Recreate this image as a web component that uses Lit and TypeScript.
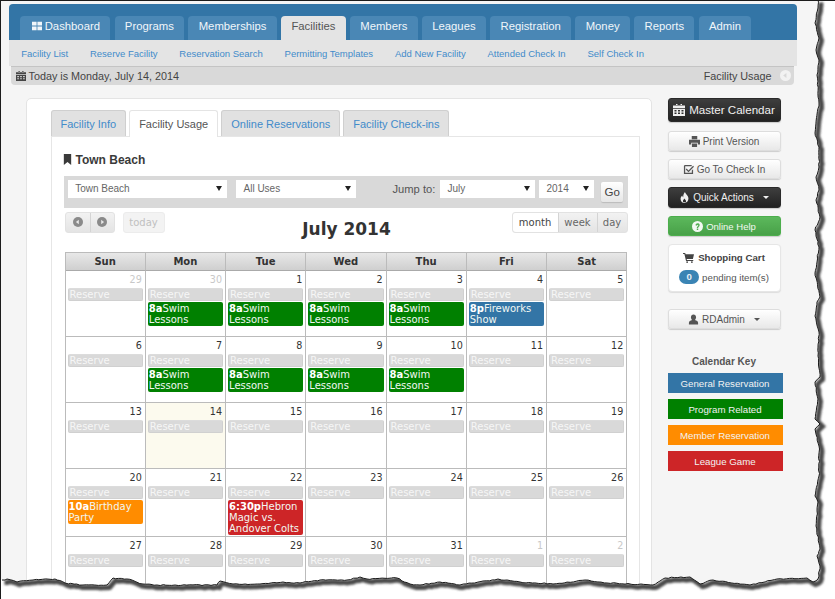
import { LitElement, html, css, svg } from "lit";
import { customElement } from "lit/decorators.js";

type Ev = { time: string; title: string; kind: string };
type Day = { n: number; other?: boolean; today?: boolean; ev?: Ev };

const swim = (): Ev => ({ time: "8a", title: "Swim Lessons", kind: "green" });

const weeks: Day[][] = [
  [{ n: 29, other: true }, { n: 30, other: true, ev: swim() }, { n: 1, ev: swim() }, { n: 2, ev: swim() }, { n: 3, ev: swim() }, { n: 4, ev: { time: "8p", title: "Fireworks Show", kind: "blue" } }, { n: 5 }],
  [{ n: 6 }, { n: 7, ev: swim() }, { n: 8, ev: swim() }, { n: 9, ev: swim() }, { n: 10, ev: swim() }, { n: 11 }, { n: 12 }],
  [{ n: 13 }, { n: 14, today: true }, { n: 15 }, { n: 16 }, { n: 17 }, { n: 18 }, { n: 19 }],
  [{ n: 20, ev: { time: "10a", title: "Birthday Party", kind: "orange" } }, { n: 21 }, { n: 22, ev: { time: "6:30p", title: "Hebron Magic vs. Andover Colts", kind: "red" } }, { n: 23 }, { n: 24 }, { n: 25 }, { n: 26 }],
  [{ n: 27 }, { n: 28 }, { n: 29 }, { n: 30 }, { n: 31 }, { n: 1, other: true }, { n: 2, other: true }],
];

const mainTabs = ["Programs", "Memberships", "Facilities", "Members", "Leagues", "Registration", "Money", "Reports", "Admin"];
const subLinks = ["Facility List", "Reserve Facility", "Reservation Search", "Permitting Templates", "Add New Facility", "Attended Check In", "Self Check In"];
const innerTabs = ["Facility Info", "Facility Usage", "Online Reservations", "Facility Check-ins"];
const dayNames = ["Sun", "Mon", "Tue", "Wed", "Thu", "Fri", "Sat"];
const calKey = [["General Reservation", "blue"], ["Program Related", "green"], ["Member Reservation", "orange"], ["League Game", "red"]];

// torn paper outline, read off the screenshot
const tornEdge = [
  [818, 0], [818, 8], [815, 23], [819, 38], [816, 50], [819, 60], [817, 75], [819, 103], [815, 133], [819, 147], [819, 167], [816, 177], [819, 190], [816, 200], [820, 217], [815, 230], [819, 247], [815, 273], [820, 297],
  [817, 302], [815, 316], [819, 332], [818, 356], [820, 377], [815, 382], [818, 399], [815, 419], [820, 424], [815, 429], [819, 446], [819, 476], [815, 496], [818, 502], [816, 526], [820, 549], [817, 556], [820, 566], [818, 579], [813, 582], [807, 578],
  [777, 579], [750, 585], [713, 580], [700, 584], [690, 577], [665, 578], [653, 585], [607, 583], [585, 580], [553, 584], [520, 582], [498, 579], [460, 585], [440, 582], [420, 585], [410, 584], [397, 578], [367, 579], [360, 577], [347, 580], [320, 580], [300, 583], [283, 582], [260, 584], [233, 584], [220, 581], [217, 585], [157, 585], [143, 584], [127, 579], [113, 578], [107, 585], [83, 585], [65, 583], [55, 579], [33, 580], [17, 582], [7, 579], [2, 580],
];

function edgePath() {
  let d = "";
  let k = 0;
  const rnd = () => {
    k++;
    const v = Math.sin(k * 12.9898) * 43758.5453;
    return v - Math.floor(v) - 0.5;
  };
  tornEdge.forEach((p, i) => {
    if (i == 0) {
      d += `M${p[0]} ${p[1]}`;
      return;
    }
    const q = tornEdge[i - 1];
    const steps = Math.max(1, Math.round(Math.hypot(p[0] - q[0], p[1] - q[1]) / 3));
    for (let s = 1; s <= steps; s++) {
      const t = s / steps;
      const x = q[0] + (p[0] - q[0]) * t + (s < steps ? rnd() * 1.1 : 0);
      const y = q[1] + (p[1] - q[1]) * t + (s < steps ? rnd() * 1.1 : 0);
      d += `L${x.toFixed(1)} ${y.toFixed(1)}`;
    }
  });
  return d;
}

const icons: Record<string, any> = {
  grid: svg`<path d="M0 1h5.500v4.500H0zM6.500 1H12v4.500H6.500zM0 6.500h5.500V11H0zM6.500 6.500H12V11H6.500z"/>`,
  calendar: svg`<path d="M3 0h1.500v2H3zM7.500 0H9v2H7.500zM0 1.500h12v2.500H0zM0 4.800h12V12H0zM1.500 6v1.400h2V6zm3.500 0v1.400h2V6zm3.500 0v1.400h2V6zM1.500 8.600V10h2V8.600zm3.500 0V10h2V8.600zm3.500 0V10h2V8.600z" fill-rule="evenodd"/>`,
  bookmark: svg`<path d="M2 0h8v12L6 8.800 2 12z"/>`,
  print: svg`<path d="M3 0h6v3.500H3zM0 4.200h12v5H9.600V7.400H2.400v1.800H0zM3.200 8.200h5.600V12H3.200z"/>`,
  check: svg`<path d="M2 1h7.500v1.400H2.400v7.200h7.200V7l1.400-1.400V11H1V2zM11 2l1 1-6 6-3-3 1-1 2 2z" fill-rule="evenodd"/>`,
  fire: svg`<path d="M6.500 0c.6 2.200 3.800 3.800 3.800 7.200 0 2.800-2 4.800-4.300 4.800S1.700 10 1.700 7.500c0-1.700.8-2.800 1.800-3.800.1 1 .5 1.600 1.100 2C4.600 3.600 5 1.800 6.500 0zM6 7C5 8.200 4.300 9 4.300 10c0 .9.800 1.300 1.700 1.300s1.700-.4 1.700-1.300C7.700 9 6.700 8.200 6 7z" fill-rule="evenodd"/>`,
  help: svg`<path d="M6 0a6 6 0 1 1 0 12A6 6 0 0 1 6 0zM3.800 4.600l1.400.5c.1-.5.4-.8.9-.8.4 0 .7.2.7.6 0 .8-1.600 1-1.600 2.600h1.500c0-1 1.700-1.300 1.700-3.100C8.400 3.200 7.400 2.500 6.100 2.500c-1.200 0-2 .8-2.300 2.100zM5.200 8.200v1.500h1.600V8.200z" fill-rule="evenodd"/>`,
  cart: svg`<path d="M0 1h2.400l.4 1.500H12l-1.200 5H4l.3 1.200h6.900v1.100H3.300L1.500 2.100H0z"/><circle cx="4.500" cy="11" r="1"/><circle cx="9.700" cy="11" r="1"/>`,
  user: svg`<path d="M6 .5c1.700 0 2.800 1.300 2.800 3.100 0 1.300-.5 2.400-1.300 3 1.900.5 3.500 1.400 3.500 2.900v2H1v-2c0-1.500 1.600-2.400 3.500-2.900-.8-.6-1.300-1.700-1.300-3C3.200 1.800 4.300.5 6 .5z"/>`,
};

const icon = (name: string, size = 12) =>
  html`<svg class="ico" width=${size} height=${size} viewBox="0 0 12 12" fill="currentColor">${icons[name]}</svg>`;

const roundArrow = (dir: "left" | "right", size: number) => html`
  <svg class="ico" width=${size} height=${size} viewBox="0 0 12 12">
    <circle cx="6" cy="6" r="6" fill="currentColor"></circle>
    <path d=${dir == "left" ? "M7 3.200v5.600L3.500 6z" : "M5 3.200v5.600L8.500 6z"} fill="var(--arrow, #fff)"></path>
  </svg>`;

@customElement("app-root")
export class AppRoot extends LitElement {
  static styles = css`
    :host {
      display: block;
      width: 835px;
      height: 599px;
      overflow: hidden;
      background: #fff;
      font-family: "Liberation Sans", Arial, sans-serif;
      color: #333;
    }
    * { box-sizing: border-box; }
    .ico { flex: none; display: block; }

    .page {
      position: relative;
      width: 835px;
      height: 599px;
      overflow: hidden;
      background: #f5f5f5;
      border-top: 1.5px solid #1c1c1c;
      border-left: 1.5px solid #1c1c1c;
      padding: 2.5px 0 0 7.5px;
    }

    .top { width: 788px; }
    .bluebar {
      height: 36px;
      padding: 12px 0 0 11.700px;
      display: flex;
      gap: 4.300px;
      background: #3375a6;
      border-radius: 4px 4px 0 0;
    }
    .mtab {
      height: 24px;
      padding: 0 10.300px 3px;
      display: flex;
      align-items: center;
      gap: 3px;
      font-size: 11.300px;
      color: #f1f6fa;
      background: #4a87b5;
      border-radius: 4px 4px 0 0;
    }
    .mtab.first { padding-left: 11.500px; }
    .mtab.on { background: #e4e4e4; color: #555; }
    .subnav {
      height: 26px;
      padding: 2px 12.700px 0;
      display: flex;
      align-items: center;
      gap: 21.800px;
      background: #e4e4e4;
      font-size: 9.500px;
      color: #428bca;
    }
    .crumb {
      margin: 0 3px 0 2px;
      height: 19px;
      padding: 0 3px 0 5px;
      display: flex;
      align-items: center;
      justify-content: space-between;
      background: #d9d9d9;
      border-top: 1px solid #c4c4c4;
      border-radius: 0 0 4px 4px;
      font-size: 10.800px;
      color: #444;
    }
    .crumb span { display: flex; align-items: center; gap: 3px; }
    .crumb .back { --arrow: #d9d9d9; color: #f2f2f2; margin-left: 5px; }

    .main {
      display: flex;
      align-items: flex-start;
      gap: 16px;
      margin: 13px 0 0 17px;
    }
    .panel {
      width: 626px;
      height: 600px;
      flex: none;
      padding: 11px 11px 0 24px;
      background: #fff;
      border: 1px solid #e4e4e4;
      border-radius: 5px;
    }
    .itabs { display: flex; gap: 3px; height: 26px; }
    .itab {
      display: flex;
      align-items: center;
      padding: 1px 9px 0;
      font-size: 11px;
      color: #428bca;
      background: #e1e1e1;
      border: 1px solid #cfcfcf;
      border-bottom: none;
      border-radius: 3px 3px 0 0;
    }
    .itab.on {
      background: #fff;
      color: #555;
      border-color: #e4e4e4;
      position: relative;
      height: 27px;
    }
    .ibox {
      border: 1px solid #e6e6e6;
      border-bottom: none;
      padding: 0 11px 0 12px;
      height: 560px;
    }
    .venue {
      display: flex;
      align-items: center;
      gap: 3px;
      height: 39px;
      padding-top: 7px;
      margin-left: -2px;
      font-size: 12px;
      font-weight: bold;
      color: #3a3a3a;
    }
    .filters {
      height: 32px;
      padding: 4px 4px 0 4.700px;
      display: flex;
      background: #d9d9d9;
      font-size: 10px;
    }
    .sel {
      height: 18px;
      padding: 0 5.500px 0 7px;
      display: flex;
      align-items: center;
      justify-content: space-between;
      background: #fff;
      color: #666;
    }
    .sel i {
      width: 0;
      height: 0;
      border-left: 3.500px solid transparent;
      border-right: 3.500px solid transparent;
      border-top: 5px solid #222;
    }
    .jump { width: 48px; margin: 3px 0 0 36px; font-size: 11.200px; color: #555; white-space: nowrap; }
    .go {
      margin: 2px 0 0 6.700px;
      width: 22px;
      height: 20px;
      display: flex;
      align-items: center;
      justify-content: center;
      font-size: 11.500px;
      color: #444;
      background: linear-gradient(#fff, #e6e6e6);
      border-radius: 2px;
      box-shadow: 0 1px 1px #bbb;
    }
    .calbar {
      display: flex;
      align-items: flex-start;
      justify-content: space-between;
      height: 44px;
      padding-top: 4px;
      font-family: "DejaVu Sans", Verdana, sans-serif;
      font-size: 10px;
    }
    .left { display: flex; gap: 8px; margin-left: 1px; }
    .group {
      display: flex;
      height: 21px;
      border: 1px solid #e2e2e2;
      border-radius: 3px;
      background: linear-gradient(#f2f2f2, #e4e4e4);
      color: #666;
    }
    .group > div {
      display: flex;
      align-items: center;
      justify-content: center;
      height: 100%;
    }
    .group > div + div { border-left: 1px solid #d4d4d4; }
    .nav { width: 24px; --arrow: #e8e8e8; color: #8a8a8a; }
    .today {
      height: 21px;
      width: 42px;
      display: flex;
      align-items: center;
      justify-content: center;
      color: #c0c0c0;
      background: #f3f3f3;
      border: 1px solid #ececec;
      border-radius: 3px;
    }
    .title {
      flex: 1;
      text-align: center;
      font-size: 17px;
      font-weight: bold;
      line-height: 20px;
      padding: 7px 0 0 17px;
      color: #333;
    }
    .view { width: 39px; }
    .view.on { background: #fff; color: #444; width: 45px; border-radius: 3px 0 0 3px; }
    .view.short { width: 30px; }

    .cal {
      display: grid;
      grid-template-columns: repeat(7, 80.250px);
      margin-left: 1px;
      width: 562.750px;
      border-left: 1px solid #bbb;
      border-top: 1px solid #bbb;
      font-family: "DejaVu Sans", Verdana, sans-serif;
      font-size: 10px;
    }
    .hd {
      height: 18px;
      display: flex;
      align-items: center;
      justify-content: center;
      font-weight: bold;
      color: #333;
      background: linear-gradient(#e8e8e8, #cfcfcf);
      border-right: 1px solid #bbb;
      border-bottom: 1px solid #aaa;
    }
    .cell {
      min-height: 66px;
      padding-bottom: 1px;
      border-right: 1px solid #bbb;
      border-bottom: 1px solid #bbb;
      background: #fff;
    }
    .cell.now { background: #fcfaee; }
    .num {
      height: 17px;
      padding: 2px 3px 0 0;
      text-align: right;
      font-size: 9.600px;
      line-height: 13px;
      color: #333;
    }
    .num.other { color: #c8c8c8; }
    .reserve {
      height: 13px;
      margin: 0 2px 1px;
      padding-left: 1px;
      line-height: 12px;
      color: #f6f6f6;
      background: #d9d9d9;
      border: 1px solid #d0d0d0;
      border-top-color: #dcdcdc;
      border-radius: 2px;
    }
    .ev {
      margin: 0 2px;
      padding: 1px 1px;
      line-height: 11px;
      color: #f2f7f2;
      border-radius: 2px;
    }
    .ev b { color: #fff; }
    .green { background: #008000; }
    .blue { background: #3375a6; }
    .orange { background: #ff8c00; }
    .red { background: #cd2527; }

    .side {
      width: 115px;
      flex: none;
      display: flex;
      flex-direction: column;
    }
    .btn {
      width: 113px;
      height: 20.400px;
      margin-bottom: 8px;
      padding-top: 1px;
      display: flex;
      align-items: center;
      justify-content: center;
      gap: 3px;
      font-size: 10px;
      color: #555;
      background: linear-gradient(#fff, #e8e8e8);
      border: 1px solid #ddd;
      border-radius: 3px;
      box-shadow: 0 1px 1px #ccc;
    }
    .btn.dark {
      color: #f0f0f0;
      background: linear-gradient(#3e3e3e, #222);
      border-color: #2a2a2a;
    }
    .btn.big { height: 24px; margin-bottom: 9px; padding-top: 0; font-size: 11.600px; gap: 4px; }
    .btn.ok {
      color: #f2f9f2;
      font-size: 9.500px;
      background: linear-gradient(#5cb85c, #48a148);
      border-color: #4cae4c;
    }
    .btn.user { margin-top: 17px; }
    .caret {
      width: 0;
      height: 0;
      margin-left: 6px;
      border-left: 3px solid transparent;
      border-right: 3px solid transparent;
      border-top: 3px solid currentColor;
    }
    .cart {
      width: 113px;
      height: 48px;
      padding-top: 6px;
      background: #fff;
      border: 1px solid #e6e6e6;
      border-radius: 4px;
      box-shadow: 0 1px 1px #ddd;
      font-size: 9.700px;
      color: #555;
    }
    .cart div { display: flex; align-items: center; justify-content: center; gap: 3px; }
    .cart .head { font-weight: bold; gap: 4px; color: #444; height: 13px; }
    .cart .items { margin-top: 6px; }
    .badge {
      width: 20px;
      height: 14px;
      border-radius: 7px;
      background: #3a84b4;
      color: #e8f0f6;
      font-weight: bold;
      text-align: center;
      line-height: 14px;
    }
    .keyhead {
      width: 113px;
      margin: 18px 0 4px;
      text-align: center;
      font-size: 10px;
      font-weight: bold;
      color: #555;
      line-height: 14px;
    }
    .key {
      height: 20px;
      margin-bottom: 6px;
      display: flex;
      align-items: center;
      justify-content: center;
      font-size: 9.700px;
      color: #f2f2f2;
    }

    .torn { position: absolute; left: -1.500px; top: -1.500px; pointer-events: none; }
  `;

  renderCell(d: Day) {
    return html`
      <div class="cell ${d.today ? "now" : ""}">
        <div class="num ${d.other ? "other" : ""}">${d.n}</div>
        <div class="reserve">Reserve</div>
        ${d.ev ? html`<div class="ev ${d.ev.kind}"><b>${d.ev.time}</b>${d.ev.title}</div>` : ""}
      </div>`;
  }

  renderTorn() {
    const line = edgePath();
    const outside = `M0 0H835V599H0Z${line}L0 580L0 0Z`;
    return html`
      <svg class="torn" width="835" height="599" viewBox="0 0 835 599">
        <defs>
          <clipPath id="out"><path d=${outside} clip-rule="evenodd"></path></clipPath>
          <filter id="soft" x="-5%" y="-5%" width="110%" height="110%"><feGaussianBlur stdDeviation="1.100"></feGaussianBlur></filter>
        </defs>
        <path d=${outside} fill="#fff" fill-rule="evenodd"></path>
        <g clip-path="url(#out)">
          <path d=${line} transform="translate(2.500 2.500)" fill="none" stroke="#4a4a4a" stroke-width="5" filter="url(#soft)"></path>
        </g>
        <path d=${line} fill="none" stroke="#1a1a1a" stroke-width="1"></path>
      </svg>`;
  }

  render() {
    return html`
      <div class="page">
        <div class="top">
          <div class="bluebar">
            <div class="mtab first">${icon("grid", 10)}Dashboard</div>
            ${mainTabs.map((t) => html`<div class="mtab ${t == "Facilities" ? "on" : ""}">${t}</div>`)}
          </div>
          <div class="subnav">${subLinks.map((s) => html`<span>${s}</span>`)}</div>
          <div class="crumb">
            <span>${icon("calendar", 10)}Today is Monday, July 14, 2014</span>
            <span>Facility Usage<span class="back">${roundArrow("left", 11)}</span></span>
          </div>
        </div>

        <div class="main">
          <div class="panel">
            <div class="itabs">
              ${innerTabs.map((t) => html`<div class="itab ${t == "Facility Usage" ? "on" : ""}">${t}</div>`)}
            </div>
            <div class="ibox">
              <div class="venue">${icon("bookmark", 11)}Town Beach</div>
              <div class="filters">
                <div class="sel" style="width:159.300px">Town Beach<i></i></div>
                <div class="sel" style="width:120px;margin-left:9px">All Uses<i></i></div>
                <div class="jump">Jump to:</div>
                <div class="sel" style="width:95px">July<i></i></div>
                <div class="sel" style="width:55px;margin-left:4px">2014<i></i></div>
                <div class="go">Go</div>
              </div>
              <div class="calbar">
                <div class="left">
                  <div class="group">
                    <div class="nav">${roundArrow("left", 10)}</div>
                    <div class="nav">${roundArrow("right", 10)}</div>
                  </div>
                  <div class="today">today</div>
                </div>
                <div class="title">July 2014</div>
                <div class="group">
                  <div class="view on">month</div>
                  <div class="view">week</div>
                  <div class="view short">day</div>
                </div>
              </div>
              <div class="cal">
                ${dayNames.map((d) => html`<div class="hd">${d}</div>`)}
                ${weeks.map((w) => w.map((d) => this.renderCell(d)))}
              </div>
            </div>
          </div>

          <div class="side">
            <div class="btn dark big">${icon("calendar", 12)}Master Calendar</div>
            <div class="btn">${icon("print", 11)}Print Version</div>
            <div class="btn">${icon("check", 11)}Go To Check In</div>
            <div class="btn dark">${icon("fire", 11)}Quick Actions<span class="caret"></span></div>
            <div class="btn dark ok">${icon("help", 11)}Online Help</div>
            <div class="cart">
              <div class="head">${icon("cart", 11)}Shopping Cart</div>
              <div class="items"><span class="badge">0</span>pending item(s)</div>
            </div>
            <div class="btn user">${icon("user", 11)}RDAdmin<span class="caret"></span></div>
            <div class="keyhead">Calendar Key</div>
            ${calKey.map((k) => html`<div class="key ${k[1]}">${k[0]}</div>`)}
          </div>
        </div>

        ${this.renderTorn()}
      </div>
    `;
  }
}
